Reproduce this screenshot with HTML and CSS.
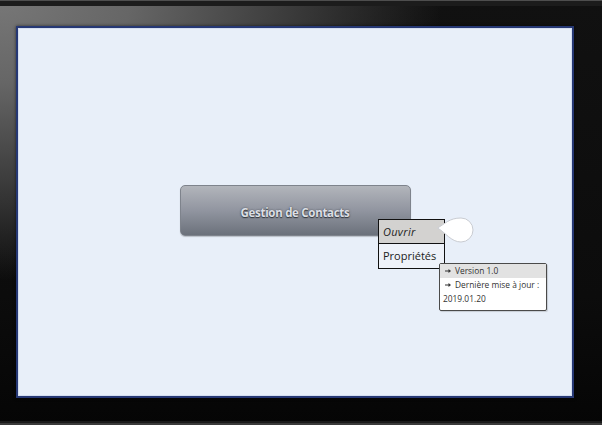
FILE: index.html
```html
<!DOCTYPE html>
<html lang="fr">
<head>
<meta charset="utf-8">
<title>Gestion de Contacts</title>
<link rel="stylesheet" href="styles.css">
</head>
<body>
<div class="frame">
  <div class="screen">
    <div class="app-btn">Gestion de Contacts</div>
    <div class="menu">
      <div class="menu-item active">Ouvrir</div>
      <div class="menu-item">Propriétés</div>
    </div>
    <svg class="bubble" width="38" height="26" viewBox="0 0 38 26">
      <path d="M0.5,11 C8,7 12,1 24,1 A12,12 0 1 1 24,25 C14,25 8,15 0.5,11 Z" fill="#ffffff" stroke="#c9ccd2" stroke-width="1"/>
    </svg>
    <div class="tooltip">
      <div class="tip-row first"><svg class="arrow" width="6" height="4" viewBox="0 0 6 4"><path d="M0,1.5 L3.5,1.5 L3.5,0 L6,2 L3.5,4 L3.5,2.5 L0,2.5 Z" fill="#333"/></svg>Version 1.0</div>
      <div class="tip-row"><svg class="arrow" width="6" height="4" viewBox="0 0 6 4"><path d="M0,1.5 L3.5,1.5 L3.5,0 L6,2 L3.5,4 L3.5,2.5 L0,2.5 Z" fill="#333"/></svg>Dernière mise à jour :</div>
      <div class="tip-row plain">2019.01.20</div>
    </div>
  </div>
</div>
</body>
</html>
```
FILE: styles.css
```css
html, body {
  margin: 0;
  padding: 0;
  background: #000;
}
.frame {
  width: 602px;
  height: 425px;
  box-sizing: border-box;
  padding: 26px 28px 27px 16px;
  background:
    linear-gradient(to bottom, #4e4e4e 0, #4e4e4e 1px, #1c1c1c 1px, #1c1c1c 6px, transparent 6px),
    linear-gradient(to top, #3a3a3a 0, #3a3a3a 2px, #1a1a1a 2px, #1a1a1a 4px, transparent 4px),
    radial-gradient(ellipse 520px 330px at 0 0, #777 0%, #666 25%, #3c3c3c 55%, rgba(17,17,17,0) 85%),
    linear-gradient(to bottom, #111 0%, #0c0c0c 70%, #050505 100%);
}
.screen {
  position: relative;
  width: 558px;
  height: 372px;
  box-sizing: border-box;
  border: 2px solid #263874;
  background: #e8eff9;
  box-shadow: inset 0 0 0 1px #d4def0, 0 0 3px rgba(0,0,0,0.6);
  display: flex;
  align-items: center;
  justify-content: center;
  padding-bottom: 3px;
}
.app-btn {
  width: 231px;
  height: 51px;
  box-sizing: border-box;
  border: 1px solid #7e838c;
  border-radius: 5px;
  background: linear-gradient(to bottom, #b2b5bb 0%, #9195a0 50%, #6b717b 100%);
  display: flex;
  align-items: center;
  justify-content: center;
  padding-top: 3px;
  font-family: "Open Sans", "Noto Sans", sans-serif;
  font-weight: 700;
  font-size: 11.5px;
  letter-spacing: -0.3px;
  color: #dcdfe4;
  text-shadow: 0 1px 1px #33363c, 0 0 2px #4a4e56;
  box-shadow: 0 1px 1px rgba(0,0,0,0.2);
}
.menu {
  position: absolute;
  left: 360px;
  top: 191px;
  width: 67px;
  box-sizing: border-box;
  border: 1px solid #111;
  background: #eef2f9;
  font-family: "Open Sans", "Noto Sans", sans-serif;
  font-size: 11px;
  color: #222;
}
.menu-item {
  height: 24px;
  line-height: 23px;
  padding-left: 4px;
  box-sizing: border-box;
}
.menu-item.active {
  background: #d3d2d0;
  border-bottom: 1px solid #111;
  font-style: italic;
  letter-spacing: 0.3px;
}
.bubble {
  position: absolute;
  left: 419px;
  top: 189px;
}
.tooltip {
  position: absolute;
  left: 421px;
  top: 235px;
  width: 108px;
  height: 48px;
  box-sizing: border-box;
  border: 1px solid #4a4a4a;
  border-radius: 2px;
  background: #ffffff;
  font-family: "Open Sans", "Noto Sans", sans-serif;
  font-size: 8.4px;
  color: #333;
  box-shadow: 1px 1px 1px rgba(0,0,0,0.15);
}
.tip-row {
  height: 14px;
  line-height: 14px;
  padding-left: 5px;
  white-space: nowrap;
}
.tip-row.first {
  background: #e2e2e2;
}
.tip-row.plain {
  padding-left: 3px;
}
.arrow {
  display: inline-block;
  vertical-align: middle;
  margin-right: 4px;
  position: relative;
  top: -1px;
}
```
